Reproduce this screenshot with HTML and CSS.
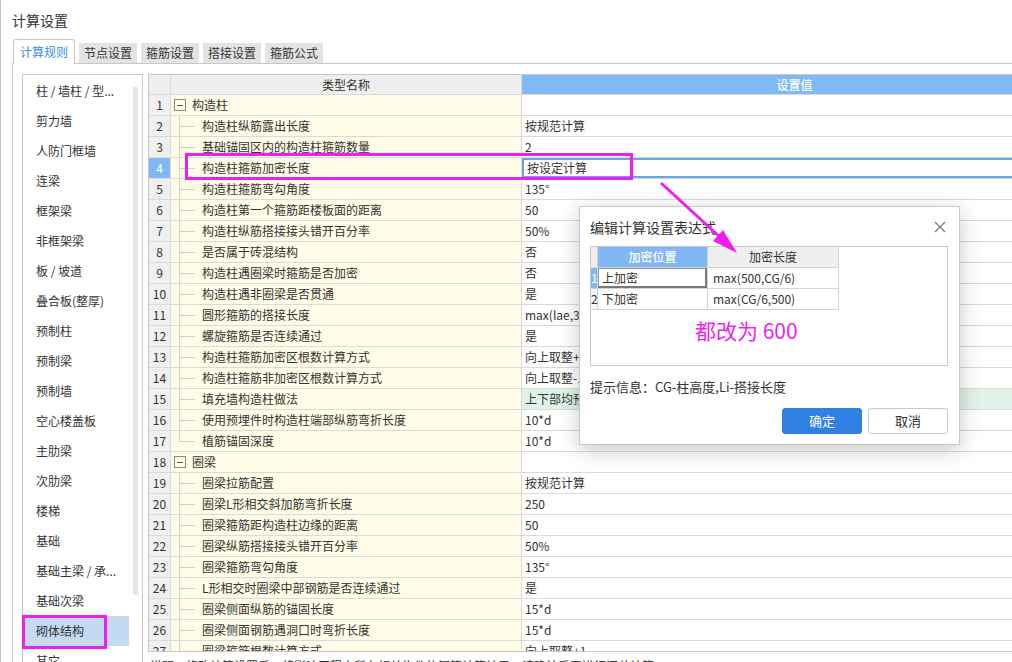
FILE: index.html
```html
<!DOCTYPE html>
<html lang="zh">
<head>
<meta charset="utf-8">
<title>计算设置</title>
<link rel="stylesheet" href="styles.css">
</head>
<body>
<div class="app">
  <div class="title">计算设置</div>
  <div class="tabs">
    <div class="tab active">计算规则</div>
    <div class="tab">节点设置</div>
    <div class="tab">箍筋设置</div>
    <div class="tab">搭接设置</div>
    <div class="tab">箍筋公式</div>
  </div>
  <div class="panel">
    <div class="list">
      <div class="items">
        <div class="item">柱 / 墙柱 / 型...</div>
        <div class="item">剪力墙</div>
        <div class="item">人防门框墙</div>
        <div class="item">连梁</div>
        <div class="item">框架梁</div>
        <div class="item">非框架梁</div>
        <div class="item">板 / 坡道</div>
        <div class="item">叠合板(整厚)</div>
        <div class="item">预制柱</div>
        <div class="item">预制梁</div>
        <div class="item">预制墙</div>
        <div class="item">空心楼盖板</div>
        <div class="item">主肋梁</div>
        <div class="item">次肋梁</div>
        <div class="item">楼梯</div>
        <div class="item">基础</div>
        <div class="item">基础主梁 / 承...</div>
        <div class="item">基础次梁</div>
        <div class="item sel">砌体结构</div>
        <div class="item">其它</div>
      </div>
      <div class="track"><div class="thumb"></div></div>
    </div>
    <div class="main">
      <div class="grid">
        <div class="row head">
          <div class="num"></div>
          <div class="hname">类型名称</div>
          <div class="hval">设置值</div>
        </div>
        <div class="row"><div class="num">1</div><div class="name"><span class="tog"><i></i></span>构造柱</div><div class="val"></div></div>
        <div class="row"><div class="num">2</div><div class="name"><span class="branch"></span>构造柱纵筋露出长度</div><div class="val">按规范计算</div></div>
        <div class="row"><div class="num">3</div><div class="name"><span class="branch"></span>基础锚固区内的构造柱箍筋数量</div><div class="val">2</div></div>
        <div class="row"><div class="num cur">4</div><div class="name"><span class="branch"></span>构造柱箍筋加密长度</div><div class="val edit">按设定计算</div></div>
        <div class="row"><div class="num">5</div><div class="name"><span class="branch"></span>构造柱箍筋弯勾角度</div><div class="val">135°</div></div>
        <div class="row"><div class="num">6</div><div class="name"><span class="branch"></span>构造柱第一个箍筋距楼板面的距离</div><div class="val">50</div></div>
        <div class="row"><div class="num">7</div><div class="name"><span class="branch"></span>构造柱纵筋搭接接头错开百分率</div><div class="val">50%</div></div>
        <div class="row"><div class="num">8</div><div class="name"><span class="branch"></span>是否属于砖混结构</div><div class="val">否</div></div>
        <div class="row"><div class="num">9</div><div class="name"><span class="branch"></span>构造柱遇圈梁时箍筋是否加密</div><div class="val">否</div></div>
        <div class="row"><div class="num">10</div><div class="name"><span class="branch"></span>构造柱遇非圈梁是否贯通</div><div class="val">是</div></div>
        <div class="row"><div class="num">11</div><div class="name"><span class="branch"></span>圆形箍筋的搭接长度</div><div class="val">max(lae,300)</div></div>
        <div class="row"><div class="num">12</div><div class="name"><span class="branch"></span>螺旋箍筋是否连续通过</div><div class="val">是</div></div>
        <div class="row"><div class="num">13</div><div class="name"><span class="branch"></span>构造柱箍筋加密区根数计算方式</div><div class="val">向上取整+1</div></div>
        <div class="row"><div class="num">14</div><div class="name"><span class="branch"></span>构造柱箍筋非加密区根数计算方式</div><div class="val">向上取整-1</div></div>
        <div class="row"><div class="num">15</div><div class="name"><span class="branch"></span>填充墙构造柱做法</div><div class="val green">上下部均预留插筋</div></div>
        <div class="row"><div class="num">16</div><div class="name"><span class="branch"></span>使用预埋件时构造柱端部纵筋弯折长度</div><div class="val">10*d</div></div>
        <div class="row"><div class="num">17</div><div class="name"><span class="branch last"></span>植筋锚固深度</div><div class="val">10*d</div></div>
        <div class="row"><div class="num">18</div><div class="name"><span class="tog"><i></i></span>圈梁</div><div class="val"></div></div>
        <div class="row"><div class="num">19</div><div class="name"><span class="branch"></span>圈梁拉筋配置</div><div class="val">按规范计算</div></div>
        <div class="row"><div class="num">20</div><div class="name"><span class="branch"></span>圈梁L形相交斜加筋弯折长度</div><div class="val">250</div></div>
        <div class="row"><div class="num">21</div><div class="name"><span class="branch"></span>圈梁箍筋距构造柱边缘的距离</div><div class="val">50</div></div>
        <div class="row"><div class="num">22</div><div class="name"><span class="branch"></span>圈梁纵筋搭接接头错开百分率</div><div class="val">50%</div></div>
        <div class="row"><div class="num">23</div><div class="name"><span class="branch"></span>圈梁箍筋弯勾角度</div><div class="val">135°</div></div>
        <div class="row"><div class="num">24</div><div class="name"><span class="branch"></span>L形相交时圈梁中部钢筋是否连续通过</div><div class="val">是</div></div>
        <div class="row"><div class="num">25</div><div class="name"><span class="branch"></span>圈梁侧面纵筋的锚固长度</div><div class="val">15*d</div></div>
        <div class="row"><div class="num">26</div><div class="name"><span class="branch"></span>圈梁侧面钢筋遇洞口时弯折长度</div><div class="val">15*d</div></div>
        <div class="row"><div class="num">27</div><div class="name"><span class="branch"></span>圈梁箍筋根数计算方式</div><div class="val">向上取整+1</div></div>
      </div>
      <div class="note">说明：修改计算设置后，将影响工程中所有相关构件的钢筋计算结果，请确认后再进行汇总计算。</div>
    </div>
  </div>
</div>

<div class="mark mark-row"></div>
<div class="mark mark-side"></div>

<div class="dialog">
  <div class="dlg-head">
    <span>编辑计算设置表达式</span>
    <svg class="close" width="12" height="12" viewBox="0 0 12 12"><path d="M1 1L11 11M11 1L1 11" stroke="#777" stroke-width="1.2" fill="none"/></svg>
  </div>
  <div class="box">
    <div class="irow ihead">
      <div class="inum"></div>
      <div class="icol blue">加密位置</div>
      <div class="icol grey">加密长度</div>
    </div>
    <div class="irow">
      <div class="inum cur">1</div>
      <div class="icell selcell">上加密</div>
      <div class="icell f">max(500,CG/6)</div>
    </div>
    <div class="irow">
      <div class="inum">2</div>
      <div class="icell">下加密</div>
      <div class="icell f">max(CG/6,500)</div>
    </div>
    <div class="anno">都改为 600</div>
  </div>
  <div class="hint">提示信息：CG-柱高度,Li-搭接长度</div>
  <div class="btns">
    <div class="btn primary">确定</div>
    <div class="btn">取消</div>
  </div>
</div>

<svg class="arrow" width="1012" height="662" viewBox="0 0 1012 662">
  <line x1="661" y1="183" x2="722" y2="239" stroke="#f01df0" stroke-width="3"/>
  <polygon points="737,253 713,241 723,230" fill="#f01df0"/>
</svg>
</body>
</html>
```

FILE: styles.css
```css
* { box-sizing: border-box; margin: 0; padding: 0; }
html, body { width: 1012px; height: 662px; overflow: hidden; background: #fff; }
body {
  font-family: "Noto Sans CJK SC", "Microsoft YaHei", sans-serif;
  font-size: 12px;
  color: #333;
  position: relative;
}
.app {
  height: 662px;
  border-left: 1px solid #c6c6c6;
  padding-left: 11px;
  display: flex;
  flex-direction: column;
}
.title { height: 39px; line-height: 40px; font-size: 14px; flex: none; }
.tabs {
  display: flex;
  align-items: flex-end;
  height: 25px;
  border-bottom: 1px solid #c8c8c8;
  gap: 4px;
  flex: none;
  padding-left: 1px;
}
.tab {
  height: 20px;
  line-height: 20px;
  padding: 0 5px;
  background: #e3e3e3;
  color: #333;
  white-space: nowrap;
}
.tab.active {
  height: 25px;
  line-height: 24px;
  padding: 0 6px;
  background: #fff;
  border: 1px solid #c8c8c8;
  border-bottom: none;
  border-radius: 3px 3px 0 0;
  color: #3a8ee6;
  margin-bottom: -1px;
  position: relative;
}
.panel {
  flex: 1;
  min-height: 0;
  display: flex;
  gap: 5px;
  border-left: 1px solid #c8c8c8;
  padding: 10px 0 0 9px;
}
.list {
  width: 121px;
  height: 640px;
  flex: none;
  border: 1px solid #c8c8c8;
  display: flex;
  padding-top: 1px;
}
.items { width: 106px; }
.item { height: 30px; line-height: 30px; padding-left: 13px; white-space: nowrap; }
.item.sel { background: #c4daf1; }
.track { width: 13px; padding: 11px 0 0 4px; }
.thumb { width: 5px; height: 508px; background: #e6e6e6; }

.main { flex: 1; min-width: 0; display: flex; flex-direction: column; }
.grid {
  height: 578px;
  flex: none;
  border: 1px solid #c8c8c8;
  border-right: none;
  overflow: hidden;
}
.row {
  display: grid;
  grid-template-columns: 22px 351px 546px;
  height: 21px;
}
.row > div {
  border-right: 1px solid #dadada;
  border-bottom: 1px solid #dadada;
  white-space: nowrap;
  overflow: hidden;
  line-height: 20px;
}
.row.head { height: 20px; }
.row.head > div { line-height: 19px; text-align: center; }
.hname { background: #efefef; }
.hval { background: #80baf6; color: #fff; font-weight: 500; }
.num { background: #f0f0f0; text-align: center; }
.num.cur { background: #7fb8f4; color: #fff; }
.head .num { background: #efefef; }
.name { background: #fffce7; display: flex; align-items: stretch; }
.val { padding-left: 3px; }
.val.green { background: #dff3e8; }
.val.edit { box-shadow: inset 0 0 0 2px #6aa5e3; padding-left: 5px; }
.tog {
  width: 12px;
  height: 12px;
  border: 1px solid #8a8a8a;
  margin: 0 6px 0 3px;
  align-self: center;
  display: flex;
  align-items: center;
  justify-content: center;
}
.tog i { display: block; width: 6px; height: 1px; background: #555; }
.branch {
  width: 16px;
  margin: 0 7px 0 8px;
  flex: none;
  background:
    linear-gradient(#d0d0d0, #d0d0d0) left top / 1px 100% no-repeat,
    linear-gradient(#d0d0d0, #d0d0d0) left 10px / 100% 1px no-repeat;
}
.branch.last {
  background:
    linear-gradient(#d0d0d0, #d0d0d0) left top / 1px 10px no-repeat,
    linear-gradient(#d0d0d0, #d0d0d0) left 10px / 100% 1px no-repeat;
}
.note { margin-top: 6px; line-height: 16px; padding-left: 2px; white-space: nowrap; }

.mark { position: absolute; border: 3px solid #f01df0; }
.mark-row { left: 185px; top: 153px; width: 448px; height: 27px; }
.mark-side { left: 22px; top: 615px; width: 85px; height: 34px; }

.dialog {
  position: absolute;
  left: 579px;
  top: 206px;
  width: 381px;
  height: 239px;
  background: #fff;
  border: 1px solid #c9c9c9;
  box-shadow: 0 5px 20px rgba(0, 0, 0, 0.22);
  display: flex;
  flex-direction: column;
  padding: 0 11px 0 10px;
}
.dlg-head {
  height: 39px;
  flex: none;
  display: flex;
  align-items: center;
  justify-content: space-between;
  font-size: 14px;
  color: #333;
}
.close { margin-right: 2px; }
.box { height: 120px; flex: none; border: 1px solid #c9c9c9; }
.irow { display: grid; grid-template-columns: 7px 110px 131px; height: 21px; }
.irow > div {
  border-right: 1px solid #d4d4d4;
  border-bottom: 1px solid #d4d4d4;
  line-height: 20px;
  white-space: nowrap;
}
.inum { background: #f4f4f4; text-align: center; font-size: 12px; overflow: visible; }
.inum.cur { background: #7fb8f4; color: #fff; }
.ihead .inum { background: #efefef; }
.icol { text-align: center; }
.icol.blue { background: #7fb8f4; color: #fff; font-weight: 500; }
.icol.grey { background: #efefef; }
.icell { padding-left: 4px; }
.icell.f { padding-left: 5px; }
.selcell { box-shadow: inset -2px -2px 0 #7a7a7a, inset 1px 1px 0 #9a9a9a; }
.anno {
  color: #f01df0;
  font-size: 21px;
  line-height: 24px;
  margin: 8px 0 0 104px;
  white-space: nowrap;
}
.hint { height: 42px; line-height: 42px; flex: none; font-size: 13px; }
.btns { display: flex; justify-content: flex-end; gap: 6px; }
.btn {
  width: 80px;
  height: 26px;
  line-height: 24px;
  text-align: center;
  border: 1px solid #c8c8c8;
  border-radius: 3px;
  background: #fff;
  font-size: 13px;
}
.btn.primary { background: #2f80e0; border-color: #2f80e0; color: #fff; }
.arrow { position: absolute; left: 0; top: 0; pointer-events: none; }
```
